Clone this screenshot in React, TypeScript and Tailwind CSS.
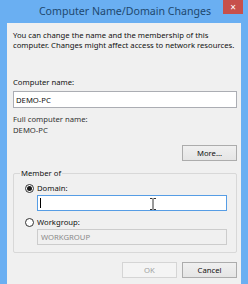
export default function App() {
  const font = { fontFamily: '"Noto Sans", "Open Sans", sans-serif' };
  return (
    <div className="w-[248px] h-[284px] bg-[#6aaff2] flex flex-col overflow-hidden" style={font}>
      {/* Title bar */}
      <div className="relative h-[23px] shrink-0 flex items-center justify-center">
        <span className="text-[10.6px] text-[#20486e] pl-[2px] pt-[1px]">Computer Name/Domain Changes</span>
        <div className="absolute right-[5px] top-0 w-[20px] h-[14px] bg-[#c7504b] flex items-center justify-center text-white text-[10px] leading-none">
          ×
        </div>
      </div>

      {/* Body */}
      <div className="flex-1 mx-[7px] bg-[#f0f0f0] pl-[6px] pr-[4px] pt-[7px] text-[7.7px] text-[#111] leading-[10px]">
        <p>You can change the name and the membership of this computer. Changes might affect access to network resources.</p>

        <div className="mt-[27px]">Computer name:</div>
        <div className="mt-[4px] h-[17px] border border-[#abadb3] bg-white flex items-center px-[2px]">DEMO-PC</div>

        <div className="mt-[6px] text-[#333]">Full computer name:</div>
        <div className="mt-[1px] text-[#333]">DEMO-PC</div>

        <div className="flex justify-end mt-[10px]">
          <div className="w-[55px] h-[16px] border border-[#acacac] bg-gradient-to-b from-[#f0f0f0] to-[#e5e5e5] flex items-center justify-center">More...</div>
        </div>

        <div className="relative mt-[12px] h-[80px] border border-[#d8d8d8] rounded-[2px] pl-[11px] pr-[9px] pt-[9px]">
          <span className="absolute left-[6px] top-[-6px] bg-[#f0f0f0] px-[1px]">Member of</span>
          <div className="flex items-center gap-[3px]">
            <span className="w-[9px] h-[9px] rounded-full border border-[#333] bg-white flex items-center justify-center">
              <span className="w-[5px] h-[5px] rounded-full bg-[#1a1a1a]" />
            </span>
            <span>Domain:</span>
          </div>
          <div className="relative mt-[2px] ml-[12px] h-[16px] border border-[#569de5] bg-white flex items-center px-[2px]">
            <span className="w-px h-[10px] bg-black" />
            <svg className="absolute left-[112px] top-[2px]" width="6" height="12" viewBox="0 0 6 12">
              <path d="M0 0.5h2.5M3.5 0.5h2.5M3 1v10M0 11.5h2.5M3.5 11.5h2.5" stroke="#333" strokeWidth="1" fill="none" />
            </svg>
          </div>
          <div className="flex items-center gap-[3px] mt-[6px]">
            <span className="w-[9px] h-[9px] rounded-full border border-[#333] bg-white" />
            <span>Workgroup:</span>
          </div>
          <div className="mt-[2px] ml-[12px] h-[16px] border border-[#cccccc] bg-[#f0f0f0] flex items-center px-[3px] text-[#8a8a8a]">
            WORKGROUP
          </div>
        </div>

        <div className="flex justify-end gap-[5px] mt-[9px]">
          <div className="w-[55px] h-[16px] border border-[#d5d5d5] bg-[#f4f4f4] text-[#a0a0a0] flex items-center justify-center">OK</div>
          <div className="w-[55px] h-[16px] border border-[#acacac] bg-gradient-to-b from-[#f0f0f0] to-[#e5e5e5] flex items-center justify-center">Cancel</div>
        </div>
      </div>
    </div>
  );
}
